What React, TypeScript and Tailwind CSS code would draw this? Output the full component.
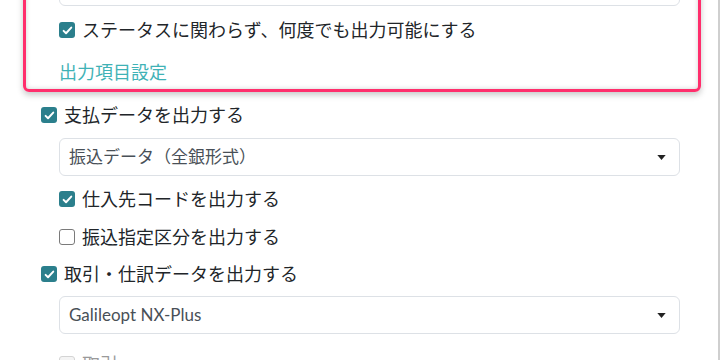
import React from "react";

const font = {
  fontFamily: 'Lato, "Noto Sans CJK JP", sans-serif',
};

function Check({ checked, disabled }: { checked?: boolean; disabled?: boolean }) {
  if (checked) {
    return (
      <span className="flex h-4 w-4 shrink-0 items-center justify-center rounded-[3px] bg-[#2b7f8c]">
        <svg viewBox="0 0 16 16" className="h-[13px] w-[13px]" fill="none">
          <path
            d="M3.2 8.4l3 3 6.4-7"
            stroke="#fff"
            strokeWidth="2.4"
            strokeLinecap="round"
            strokeLinejoin="round"
          />
        </svg>
      </span>
    );
  }
  return (
    <span
      className={
        disabled
          ? "h-4 w-4 shrink-0 rounded-[3px] border border-[#d4d4d4] bg-[#f4f4f4]"
          : "h-4 w-4 shrink-0 rounded-[3px] border border-[#7a7a7a] bg-white"
      }
    />
  );
}

function Row({
  checked,
  disabled,
  label,
  className,
}: {
  checked?: boolean;
  disabled?: boolean;
  label: string;
  className?: string;
}) {
  return (
    <div className={`flex h-6 items-center gap-[7px] ${className ?? ""}`}>
      <Check checked={checked} disabled={disabled} />
      <span
        className={
          disabled
            ? "text-[18px] leading-6 text-[#9a9a9a]"
            : "text-[18px] leading-6 text-[#212529]"
        }
      >
        {label}
      </span>
    </div>
  );
}

function Select({ value, className }: { value: string; className?: string }) {
  return (
    <div
      className={`flex h-[38px] w-[621px] items-center justify-between rounded-md border border-[#dde1e6] bg-white pl-[9px] pr-[13px] ${className ?? ""}`}
    >
      <span className="text-[17px] text-[#495057]">{value}</span>
      <svg viewBox="0 0 10 6" className="h-[5px] w-[9px]">
        <path d="M0 0h10L5 6z" fill="#222" />
      </svg>
    </div>
  );
}

export default function App() {
  return (
    <div
      className="relative h-[360px] w-[720px] overflow-hidden border-r-2 border-[#cfcfcf] bg-white"
      style={font}
    >
      {/* highlighted block */}
      <div className="ml-[23px] mt-[-40px] w-[678px] rounded-md border-[3px] border-[#ff2e6c] pb-[5px] pl-[33px] pr-[18px] pt-[5px] shadow-[0_3px_6px_rgba(0,0,0,0.22),inset_0_0_5px_rgba(0,0,0,0.18)]">
        <div className="h-[38px] w-[621px] rounded-md border border-[#dde1e6] bg-white" />
        <Row checked label="ステータスに関わらず、何度でも出力可能にする" className="mt-3" />
        <div className="mt-[18px] h-6 text-[18px] leading-6 text-[#3fb2b6]">出力項目設定</div>
      </div>

      {/* rest of form */}
      <div className="pl-[41px]">
        <Row checked label="支払データを出力する" className="mt-[11px]" />
        <div className="pl-[18px]">
          <Select value="振込データ（全銀形式）" className="mt-[11px]" />
          <Row checked label="仕入先コードを出力する" className="mt-[11px]" />
          <Row label="振込指定区分を出力する" className="mt-[14px]" />
        </div>
        <Row checked label="取引・仕訳データを出力する" className="mt-[13px]" />
        <div className="pl-[18px]">
          <Select value="Galileopt NX-Plus" className="mt-[10px]" />
          <Row disabled label="取引" className="mt-[18px]" />
        </div>
      </div>
    </div>
  );
}
